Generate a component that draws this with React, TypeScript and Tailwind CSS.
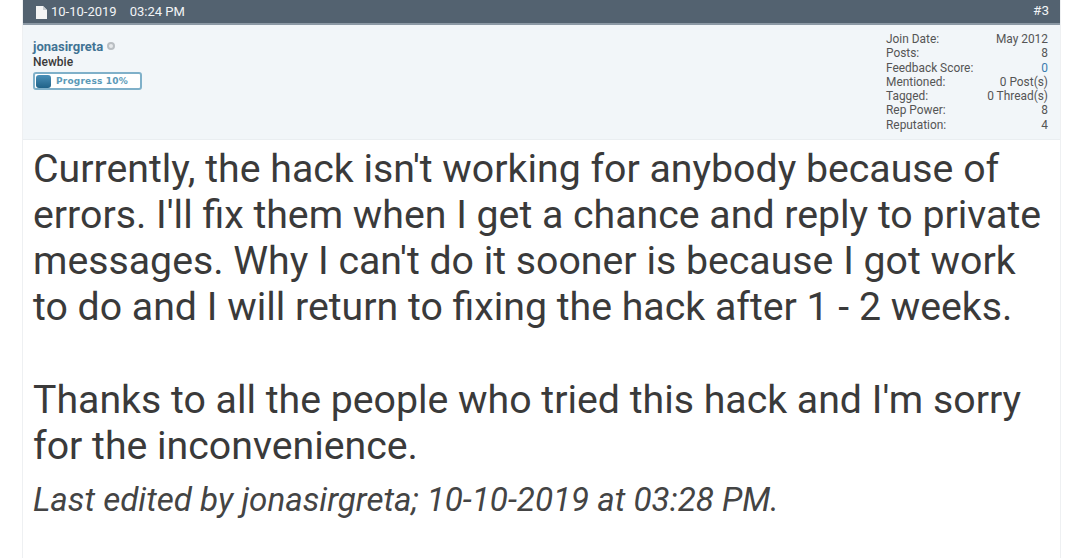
import React from "react";

const stats = [
  { label: "Join Date:", value: "May 2012" },
  { label: "Posts:", value: "8" },
  { label: "Feedback Score:", value: "0", link: true },
  { label: "Mentioned:", value: "0 Post(s)" },
  { label: "Tagged:", value: "0 Thread(s)" },
  { label: "Rep Power:", value: "8" },
  { label: "Reputation:", value: "4" },
];

const App: React.FC = () => {
  return (
    <div className="w-[1080px] h-[558px] overflow-hidden bg-white font-['Roboto',sans-serif]">
      <div className="ml-[22px] w-[1039px] h-[558px] border-r border-l border-[#eef0f2] box-border">
        <div className="h-[25px] bg-[#536270] border-b-2 border-[#8c99a5] flex flex-row justify-between text-[13px] text-[#f2f4f6] pl-[13px] pr-[11px] box-border">
          <div className="flex flex-row items-center gap-[4px] h-[23px]">
            <svg width="11" height="13" viewBox="0 0 11 13" className="mt-[1px]">
              <path d="M0 0H7L11 4V13H0Z" fill="#f4f4f4" />
              <path d="M7 0V4H11" fill="#c8ccd0" />
            </svg>
            <span className="leading-[23px]">10-10-2019</span>
            <span className="leading-[23px] ml-[9px]">03:24 PM</span>
          </div>
          <span className="leading-[20px] text-[13.5px]">#3</span>
        </div>
        <div className="h-[115px] bg-[#f2f6f9] border-b border-[#eaeef1] flex flex-row justify-between pl-[10px] pr-[12px] box-border">
          <div className="flex flex-col pt-[14px]">
            <div className="flex flex-row items-center gap-[4px] h-[15px]">
              <span className="text-[13px] font-bold text-[#417394] leading-[15px]">jonasirgreta</span>
              <span className="w-[8px] h-[8px] rounded-full border-2 border-[#b9bec2] bg-[#e6e9eb] mb-[1px]" />
            </div>
            <span className="text-[12px] font-medium text-[#3a3a3a] leading-[15px] mt-[1px]">Newbie</span>
            <div className="mt-[2px] w-[109px] h-[18px] bg-white border-2 border-[#7fb0c9] rounded-[3px] flex flex-row items-center gap-[5px] pl-[1px] box-border">
              <span className="w-[15px] h-[13px] rounded-[3px] bg-gradient-to-b from-[#4a90b8] to-[#1f6288]" />
              <span className="text-[9px] font-bold text-[#5b9ab8] tracking-[0.2px] leading-[14px] font-['DejaVu_Sans',sans-serif]">Progress 10%</span>
            </div>
          </div>
          <div className="w-[162px] flex flex-col pt-[7px] text-[11.9px] text-[#555555] leading-[14.3px]">
            {stats.map((s) => (
              <div key={s.label} className="flex flex-row justify-between">
                <span>{s.label}</span>
                <span className={s.link ? "text-[#3b7cb0]" : ""}>{s.value}</span>
              </div>
            ))}
          </div>
        </div>
        <div className="pl-[10px] pt-[6px] text-[39.25px] leading-[46.1px] text-[#3a3a3a]">
          <p>Currently, the hack isn't working for anybody because of</p>
          <p>errors. I'll fix them when I get a chance and reply to private</p>
          <p>messages. Why I can't do it sooner is because I got work</p>
          <p>to do and I will return to fixing the hack after 1 - 2 weeks.</p>
          <p className="mt-[47px]">Thanks to all the people who tried this hack and I'm sorry</p>
          <p>for the inconvenience.</p>
          <p className="mt-[7px] italic text-[33.2px] text-[#444444]">Last edited by jonasirgreta; 10-10-2019 at 03:28 PM.</p>
        </div>
      </div>
    </div>
  );
};

export default App;
